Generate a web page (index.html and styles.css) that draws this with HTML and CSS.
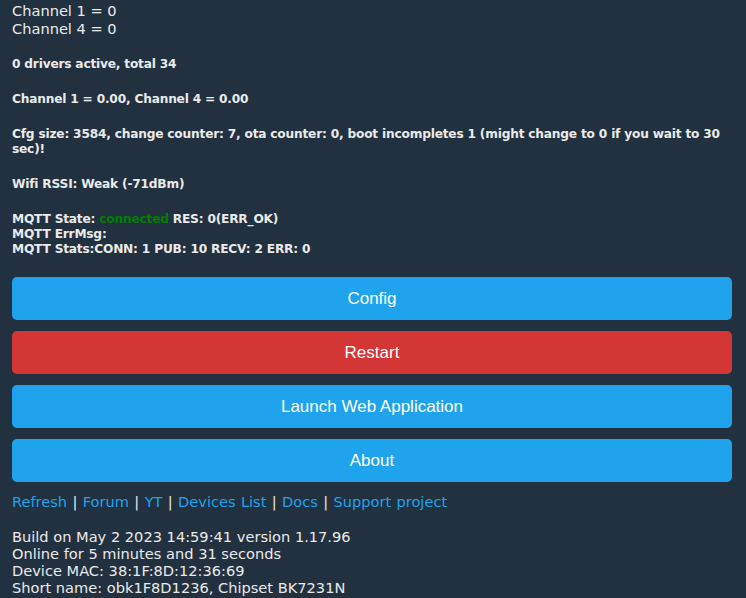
FILE: index.html
```html
<!DOCTYPE html>
<html>
<head>
<meta charset="utf-8">
<link rel="stylesheet" href="styles.css">
</head>
<body>
<div class="page">
  <div class="state">Channel 1 = 0<br>Channel 4 = 0</div>
  <h5 class="info">0 drivers active, total 34</h5>
  <h5 class="info">Channel 1 = 0.00, Channel 4 = 0.00</h5>
  <h5 class="info">Cfg size: 3584, change counter: 7, ota counter: 0, boot incompletes 1 (might change to 0 if you wait to 30 sec)!</h5>
  <h5 class="info">Wifi RSSI: Weak (-71dBm)</h5>
  <h5 class="info">MQTT State: <span class="ok">connected</span> RES: 0(ERR_OK)<br>MQTT ErrMsg: <br>MQTT Stats:CONN: 1 PUB: 10 RECV: 2 ERR: 0</h5>
  <div class="buttons">
    <button class="btn">Config</button>
    <button class="btn red">Restart</button>
    <button class="btn">Launch Web Application</button>
    <button class="btn">About</button>
  </div>
  <div class="links"><a href="#">Refresh</a> | <a href="#">Forum</a> | <a href="#">YT</a> | <a href="#">Devices List</a> | <a href="#">Docs</a> | <a href="#">Support project</a></div>
  <div class="build">Build on May 2 2023 14:59:41 version 1.17.96<br>Online for 5 minutes and 31 seconds<br>Device MAC: 38:1F:8D:12:36:69<br>Short name: obk1F8D1236, Chipset BK7231N</div>
</div>
</body>
</html>
```
FILE: styles.css
```css
html, body {
  margin: 0;
  padding: 0;
  background: #22313f;
}
body {
  font-family: "DejaVu Sans", Verdana, sans-serif;
  font-size: 14.6px;
  color: #eaeaea;
}
.page {
  padding: 2px 14px 0 12px;
}
.state {
  line-height: 17.7px;
}
.info {
  font-size: 12.2px;
  letter-spacing: -0.2px;
  font-weight: bold;
  line-height: 15px;
  margin: 20px 0 0 0;
}
.ok {
  color: #008000;
}
.buttons {
  display: flex;
  flex-direction: column;
  gap: 11px;
  margin-top: 20px;
}
.btn {
  border: 0;
  border-radius: 5px;
  background: #1fa3ec;
  color: #fff;
  font-family: "Liberation Sans", Arial, sans-serif;
  font-size: 17px;
  height: 43px;
  width: 100%;
  padding: 0;
}
.btn.red {
  background: #d43535;
}
.links {
  margin-top: 11px;
  line-height: 17px;
  word-spacing: 0.7px;
}
.links a {
  color: #1fa3ec;
  text-decoration: none;
}
.build {
  margin-top: 18px;
  line-height: 17px;
}
```
